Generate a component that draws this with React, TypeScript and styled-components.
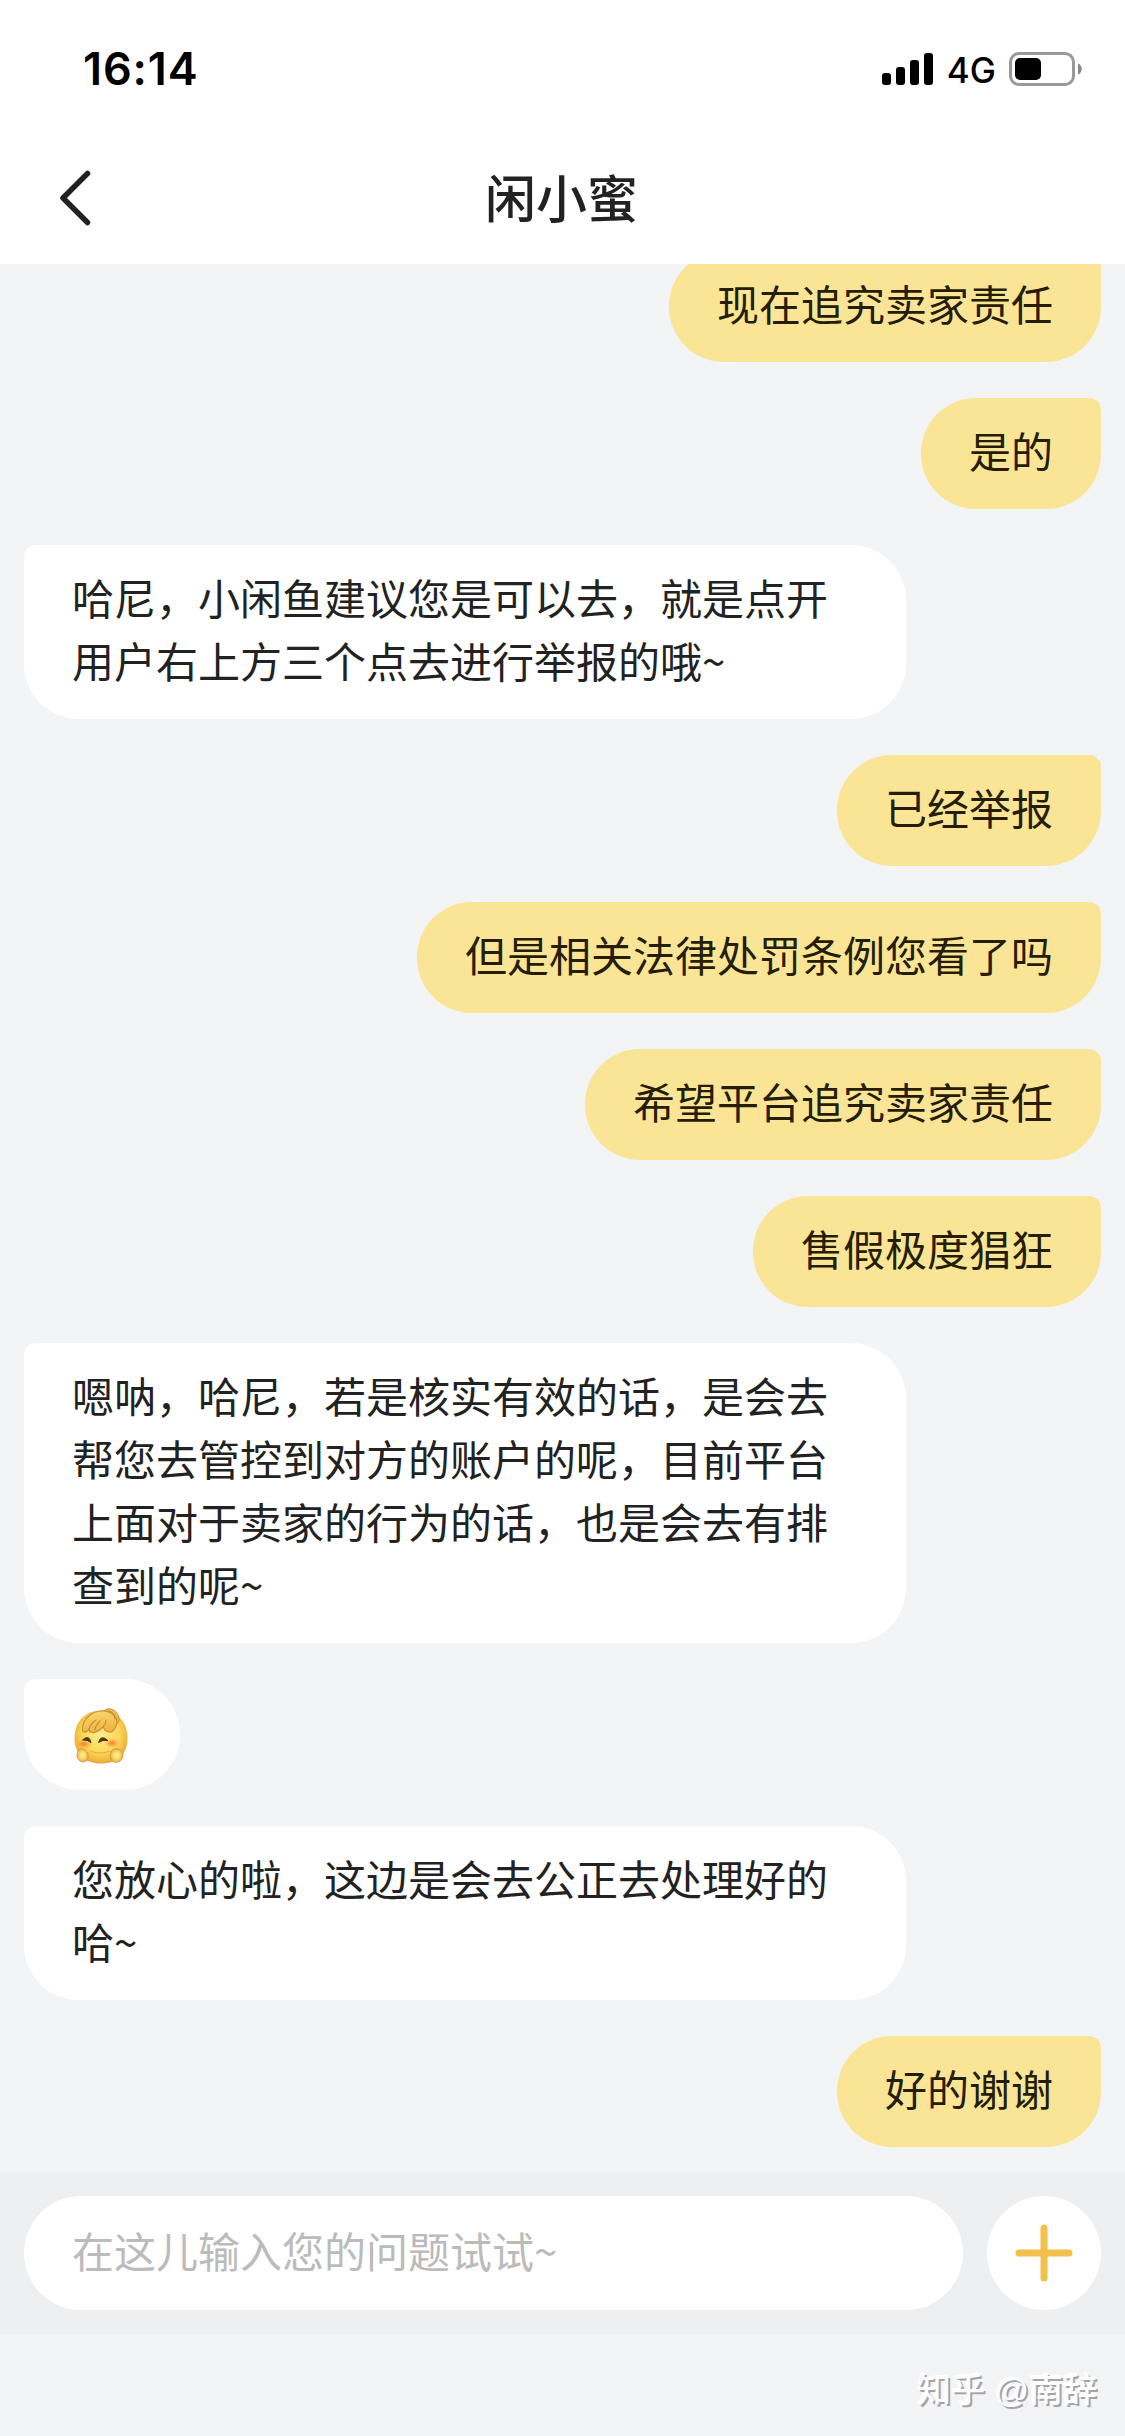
import React from "react";
import styled, { createGlobalStyle, css } from "styled-components";

const GlobalStyle = createGlobalStyle`
  * { box-sizing: border-box; }
  html, body { margin: 0; padding: 0; background: #f2f4f6; }
  body { font-family: "Liberation Sans", "Noto Sans CJK SC", sans-serif; }
`;

const Screen = styled.div`
  width: 1125px;
  height: 2436px;
  display: flex;
  flex-direction: column;
  overflow: hidden;
  background: #f2f4f6;
  color: #222;
`;

const Header = styled.header`
  flex: none;
  height: 264px;
  background: #fff;
  display: flex;
  flex-direction: column;
`;

const StatusBar = styled.div`
  height: 132px;
  padding: 6px 42px 0 83px;
  display: flex;
  align-items: center;
  justify-content: space-between;
  color: #000;
  font-family: Inter, sans-serif;
`;

const Clock = styled.span`
  font-size: 45px;
  font-weight: 600;
  letter-spacing: 0.9px;
  line-height: 60px;
`;

const StatusIcons = styled.div`
  display: flex;
  align-items: center;
`;

const Network = styled.span`
  margin: 2px 13px 0 14px;
  font-size: 35px;
  font-weight: 500;
  line-height: 44px;
`;

const NavBar = styled.nav`
  height: 132px;
  padding: 0 57px;
  display: grid;
  grid-template-columns: 120px 1fr 120px;
  align-items: center;
`;

const BackButton = styled.button`
  width: 60px;
  height: 60px;
  padding: 0;
  border: 0;
  background: none;
  display: flex;
  align-items: center;
`;

const Title = styled.h1`
  margin: 0;
  padding: 5px 2px 0 0;
  text-align: center;
  font-size: 51px;
  font-weight: 500;
  line-height: 72px;
`;

const Chat = styled.main`
  flex: none;
  height: 1908px;
  padding: 0 24px 25px;
  display: flex;
  flex-direction: column;
  justify-content: flex-end;
  gap: 36px;
  overflow: hidden;
`;

const Bubble = styled.div<{ $mine?: boolean }>`
  flex: none;
  max-width: 882px;
  min-height: 111px;
  padding: 20px 48px 28px;
  font-family: "Noto Sans CJK SC", sans-serif;
  font-size: 42px;
  line-height: 63px;
  ${({ $mine }) =>
    $mine
      ? css`
          align-self: flex-end;
          background: #fae596;
          color: #251d05;
          border-radius: 55px 12px 55px 55px;
        `
      : css`
          align-self: flex-start;
          background: #fff;
          border-radius: 12px 55px 55px 55px;
        `}
`;

const Sticker = styled.svg`
  display: block;
  width: 60px;
  height: 60px;
  margin: 6px 0 -3px;
`;

const Composer = styled.footer`
  flex: none;
  height: 162px;
  padding: 24px;
  display: flex;
  gap: 24px;
  background: #eeeff1;
`;

const Field = styled.div`
  flex: 1;
  padding: 0 48px;
  border-radius: 57px;
  background: #fff;
  color: #bbb;
  font-family: "Noto Sans CJK SC", sans-serif;
  font-size: 42px;
  line-height: 108px;
`;

const AddButton = styled.button`
  width: 114px;
  height: 114px;
  padding: 0;
  border: 0;
  border-radius: 50%;
  background: #fff;
  display: flex;
  align-items: center;
  justify-content: center;
`;

const Bottom = styled.div`
  flex: 1;
  padding: 0 28px 0 0;
  display: flex;
  align-items: center;
  justify-content: flex-end;
`;

const Watermark = styled.span`
  margin-top: 9px;
  font-size: 34px;
  font-weight: 500;
  line-height: 44px;
  color: #fdfdfd;
  text-shadow: 2px 2px 0 #a4a4a6, -1px -1px 1px #fff;
`;

type Message = { text?: string; mine?: boolean };

const messages: Message[] = [
  { text: "现在追究卖家责任", mine: true },
  { text: "是的", mine: true },
  { text: "哈尼，小闲鱼建议您是可以去，就是点开用户右上方三个点去进行举报的哦~" },
  { text: "已经举报", mine: true },
  { text: "但是相关法律处罚条例您看了吗", mine: true },
  { text: "希望平台追究卖家责任", mine: true },
  { text: "售假极度猖狂", mine: true },
  {
    text: "嗯呐，哈尼，若是核实有效的话，是会去帮您去管控到对方的账户的呢，目前平台上面对于卖家的行为的话，也是会去有排查到的呢~",
  },
  {},
  { text: "您放心的啦，这边是会去公正去处理好的哈~" },
  { text: "好的谢谢", mine: true },
];

const Signal = () => (
  <svg width="51" height="32" viewBox="0 0 51 32">
    <rect x="0" y="20" width="9" height="12" rx="3" />
    <rect x="14" y="14" width="9" height="18" rx="3" />
    <rect x="28" y="7" width="9" height="25" rx="3" />
    <rect x="42" y="0" width="9" height="32" rx="3" />
  </svg>
);

const Battery = () => (
  <svg width="74" height="34" viewBox="0 0 74 34">
    <rect x="1.5" y="1.5" width="63" height="31" rx="8.5" fill="none" stroke="#999" strokeWidth="3" />
    <rect x="6" y="6" width="26" height="22" rx="5" />
    <path d="M69 11.500c5 1.500 5 9.500 0 11z" fill="#888" />
  </svg>
);

const HugFace = () => (
  <Sticker viewBox="0 0 60 60">
    <defs>
      <radialGradient id="skin" cx="0.5" cy="0.45" r="0.58">
        <stop offset="0" stopColor="#ffec8e" />
        <stop offset="0.6" stopColor="#fbd857" />
        <stop offset="0.88" stopColor="#efb43e" />
        <stop offset="1" stopColor="#d9973f" />
      </radialGradient>
      <linearGradient id="hair" x1="0" y1="0" x2="0.3" y2="1">
        <stop offset="0" stopColor="#fbdd72" />
        <stop offset="1" stopColor="#eeb544" />
      </linearGradient>
      <radialGradient id="hand">
        <stop offset="0.3" stopColor="#ffe680" />
        <stop offset="1" stopColor="#efb642" />
      </radialGradient>
      <radialGradient id="blush">
        <stop offset="0" stopColor="#f9602c" stopOpacity="0.85" />
        <stop offset="1" stopColor="#fa9a3c" stopOpacity="0" />
      </radialGradient>
    </defs>
    <path d="M29 5.500C13 5.500 2.500 17 2.500 33C2.500 49 13 58.500 29 58.500C46 58.500 55.500 49 55.500 33C55.500 17 45 5.500 29 5.500z" fill="url(#skin)" />
    <path d="M32 6C35 1.500 44 4 46.500 11C48 15 47 18 44 19L36 12z" fill="#f1bf4c" stroke="#c98f35" strokeWidth="1" />
    <path d="M10.500 26C10 20 13 14 18 10C23 6 33 4 39 8C45 11 46 17 44 21C43 26 39 28 35 26.500C33 26 32 24 31 22C27 26 24 28 20 27.500C18 27 17 25 17 24C15 27 12 28 10.500 26z" fill="url(#hair)" stroke="#c98f35" strokeWidth="1.200" strokeLinejoin="round" />
    <path d="M17 24C18 20 21 17 24 15M23 25C23 21 25 19 28 16M31 22C33 20 34 18 34 15M37 6C40 7 43 10 43 14" fill="none" stroke="#c98f35" strokeWidth="1.200" strokeLinecap="round" />
    <ellipse cx="12" cy="39" rx="8" ry="4.500" fill="url(#blush)" />
    <ellipse cx="40" cy="38" rx="8" ry="5" fill="url(#blush)" />
    <path d="M10.500 35Q17 29 19 37.500Q15.500 34.500 10.500 35M26.500 37.500Q29 29 36 35.500Q31 34.500 26.500 37.500" fill="#4a3a0c" stroke="#4a3a0c" strokeWidth="1" strokeLinejoin="round" />
    <path d="M19 46Q28 50 38 46" fill="none" stroke="#e9ac42" strokeWidth="1.200" />
    <path d="M6 46C9 41 15 45 16 50C17 55 13 58 9 56.500C5 55 4 50 6 46z" fill="url(#hand)" stroke="#d2963c" strokeWidth="0.900" />
    <path d="M39 47C42 41 50 44 51 49C51.500 55 46 59 41 56.500C38 54 38 50 39 47z" fill="url(#hand)" stroke="#d2963c" strokeWidth="0.900" />
  </Sticker>
);

export default function App() {
  return (
    <Screen>
      <GlobalStyle />
      <Header>
        <StatusBar>
          <Clock>16:14</Clock>
          <StatusIcons>
            <Signal />
            <Network>4G</Network>
            <Battery />
          </StatusIcons>
        </StatusBar>
        <NavBar>
          <BackButton aria-label="返回">
            <svg width="36" height="56" viewBox="0 0 36 56" fill="none">
              <path d="M30.500 3.500L6 28L30.500 52.500" stroke="#222" strokeWidth="5.500" strokeLinecap="round" strokeLinejoin="round" />
            </svg>
          </BackButton>
          <Title>闲小蜜</Title>
        </NavBar>
      </Header>
      <Chat>
        {messages.map((m, i) => (
          <Bubble key={i} $mine={m.mine}>
            {m.text ?? <HugFace />}
          </Bubble>
        ))}
      </Chat>
      <Composer>
        <Field>在这儿输入您的问题试试~</Field>
        <AddButton aria-label="更多">
          <svg width="58" height="58" viewBox="0 0 58 58">
            <path d="M29 4V54M4 29H54" stroke="#f3c04c" strokeWidth="7" strokeLinecap="round" />
          </svg>
        </AddButton>
      </Composer>
      <Bottom>
        <Watermark>知乎 @南辞</Watermark>
      </Bottom>
    </Screen>
  );
}
